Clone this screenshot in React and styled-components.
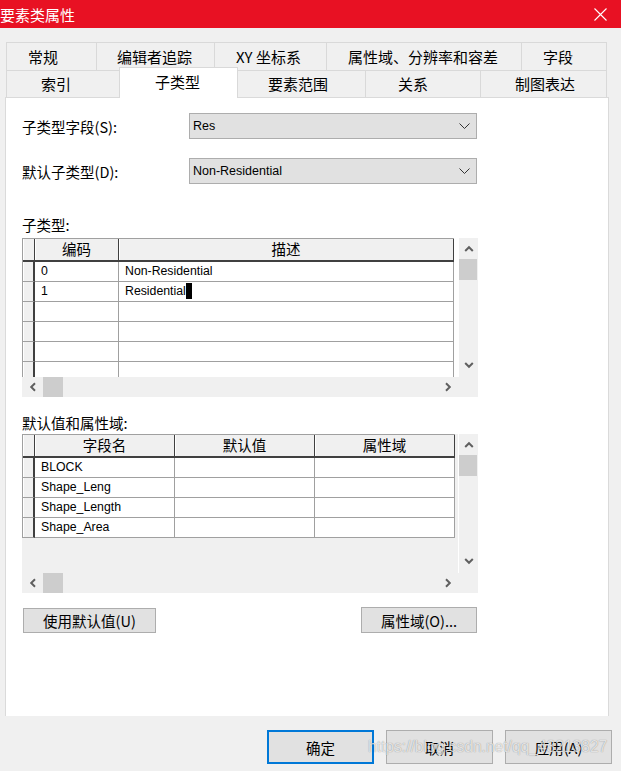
import React from "react";
import styled, { createGlobalStyle, css } from "styled-components";

const GlobalStyle = createGlobalStyle`
  html, body { margin: 0; padding: 0; background: #f0f0f0; }
  body { font-family: "Noto Sans CJK SC", "Liberation Sans", sans-serif; color: #000; }
  * { box-sizing: border-box; }
`;

const Window = styled.div`
  position: relative;
  width: 621px;
  height: 771px;
  background: #f0f0f0;
  display: flex;
  flex-direction: column;
  overflow: hidden;
`;

const TitleBar = styled.div`
  flex: none;
  height: 28px;
  background: #e81123;
  color: #fff;
  display: flex;
  align-items: center;
  justify-content: space-between;
  padding: 0 14px 0 0;
  font-size: 15px;
`;

const TabStrip = styled.div`
  flex: none;
  margin: 14px 0 0 6px;
  width: 601px;
  display: flex;
  flex-direction: column;
  font-size: 15px;
`;

const TabRow = styled.div`
  display: flex;
  align-items: flex-start;
  height: ${(p) => p.$h}px;
`;

const Tab = styled.div`
  flex: none;
  width: ${(p) => p.$w}px;
  height: 100%;
  padding-left: ${(p) => p.$pad}px;
  padding-bottom: 1px;
  display: flex;
  align-items: center;
  white-space: nowrap;
  background: #f0f0f0;
  border-top: 1px solid #d9d9d9;
  border-left: 1px solid #d9d9d9;
  &:last-child { border-right: 1px solid #d9d9d9; }
  ${(p) =>
    p.$active &&
    css`
      position: relative;
      z-index: 1;
      background: #fff;
      height: 31px;
      margin-top: -3px;
      padding-bottom: 4px;
      border-right: 1px solid #d9d9d9;
      & + div { border-left: none; }
    `}
`;

const Panel = styled.div`
  flex: none;
  margin-left: 5px;
  width: 604px;
  height: 619px;
  background: #fff;
  border: 1px solid #dadada;
  border-bottom: none;
  padding: 15px 0 0 16px;
  display: flex;
  flex-direction: column;
`;

const FieldRow = styled.div`
  display: flex;
  align-items: center;
  height: 26px;
  margin-top: ${(p) => p.$mt || 0}px;
`;

const Label = styled.div`
  width: 167px;
  font-size: 14.5px;
  white-space: nowrap;
`;

const Combo = styled.div`
  width: 288px;
  height: 26px;
  background: #e1e1e1;
  border: 1px solid #adadad;
  display: flex;
  align-items: center;
  justify-content: space-between;
  padding: 0 6px 0 3px;
  font: 12.5px "Liberation Sans", sans-serif;
`;

const SectionLabel = styled.div`
  height: 20px;
  line-height: 20px;
  font-size: 14.5px;
  margin-top: ${(p) => p.$mt}px;
  margin-bottom: ${(p) => p.$mb}px;
`;

const GridBox = styled.div`
  width: 456px;
  height: 159px;
  display: grid;
  grid-template-columns: 437px 19px;
  grid-template-rows: 139px 20px;
  background: #f0f0f0;
`;

const DataArea = styled.div`
  overflow: hidden;
  background: ${(p) => p.$bg};
  border-right: 1px solid #fff;
`;

const Table = styled.div`
  width: max-content;
  display: flex;
  flex-direction: column;
  border-left: 1px solid #a0a0a0;
  border-top: 1px solid #a0a0a0;
`;

const TRow = styled.div`
  display: grid;
  grid-template-columns: ${(p) => p.$cols};
  height: ${(p) => (p.$head ? 23 : 20)}px;
  flex: none;
`;

const HeadCell = styled.div`
  background: #f0f0f0;
  border-right: 1px solid #404040;
  border-bottom: 2px solid #404040;
  box-shadow: inset 1px 0 0 #fff;
  display: flex;
  align-items: center;
  justify-content: center;
  font-size: 14.5px;
  line-height: 1;
`;

const SelectCell = styled.div`
  background: #f0f0f0;
  border-right: 2px solid #404040;
  border-bottom: 1px solid #a0a0a0;
  box-shadow: inset 1px 0 0 #fff;
`;

const Cell = styled.div`
  background: #fff;
  border-right: 1px solid #a0a0a0;
  border-bottom: 1px solid #a0a0a0;
  padding-left: 6px;
  font: 12.3px "Liberation Sans", sans-serif;
  line-height: 19px;
  white-space: nowrap;
`;

const Caret = styled.span`
  display: inline-block;
  width: 6px;
  height: 16px;
  background: #000;
  vertical-align: -4px;
`;

const VScroll = styled.div`
  display: flex;
  flex-direction: column;
  background: #f0f0f0;
`;

const HScroll = styled.div`
  display: flex;
  background: #f0f0f0;
`;

const ArrowBox = styled.div`
  flex: none;
  width: ${(p) => (p.$w ? `${p.$w}px` : "100%")};
  height: ${(p) => (p.$h ? `${p.$h}px` : "100%")};
  display: flex;
  align-items: center;
  justify-content: center;
`;

const Thumb = styled.div`
  flex: none;
  background: #cdcdcd;
  width: ${(p) => (p.$v ? "18px" : "20px")};
  height: ${(p) => (p.$v ? "21px" : "100%")};
`;

const Spacer = styled.div`
  flex: 1;
`;

const ButtonRow = styled.div`
  width: 455px;
  margin-top: 14px;
  display: flex;
  justify-content: space-between;
  align-items: flex-start;
`;

const Button = styled.div`
  width: ${(p) => p.$w}px;
  height: ${(p) => p.$h}px;
  margin-top: ${(p) => p.$mt || 0}px;
  margin-left: ${(p) => p.$ml || 0}px;
  background: #e1e1e1;
  border: ${(p) => (p.$primary ? "2px solid #0078d7" : "1px solid #adadad")};
  display: flex;
  align-items: center;
  justify-content: center;
  font-size: 14.5px;
  white-space: nowrap;
`;

const Footer = styled.div`
  flex: none;
  margin-top: 14px;
  padding-right: 9px;
  display: flex;
  justify-content: flex-end;
  gap: 12px;
`;

const Watermark = styled.div`
  position: absolute;
  left: 368px;
  top: 738px;
  font: 15.6px "Liberation Sans", sans-serif;
  color: rgba(255, 255, 255, 0.75);
  text-shadow: 0 0 1px rgba(0, 0, 0, 0.45);
  pointer-events: none;
  white-space: nowrap;
`;

const Chevron = ({ dir = "down", size = 10, color = "#606060", width = 2 }) => {
  const rot = { down: 0, up: 180, left: 90, right: -90 }[dir];
  return (
    <svg width={size} height={size} viewBox="0 0 10 10" style={{ transform: `rotate(${rot}deg)` }}>
      <path d="M1.2 3 L5 6.8 L8.8 3" fill="none" stroke={color} strokeWidth={width} />
    </svg>
  );
};

const ComboArrow = () => (
  <svg width="11" height="6" viewBox="0 0 11 6">
    <path d="M0.5 0.5 L5.5 5.5 L10.5 0.5" fill="none" stroke="#333" strokeWidth="1" />
  </svg>
);

const CloseIcon = () => (
  <svg width="13" height="13" viewBox="0 0 13 13">
    <path d="M0.5 0.5 L12.5 12.5 M12.5 0.5 L0.5 12.5" stroke="#fff" strokeWidth="1.1" />
  </svg>
);

const row1 = [
  ["常规", 90, 21],
  ["编辑者追踪", 118, 20],
  ["XY 坐标系", 112, 21],
  ["属性域、分辨率和容差", 195, 21],
  ["字段", 86, 21],
];

const row2 = [
  ["索引", 113, 34],
  ["子类型", 119, 35, true],
  ["要素范围", 127, 30],
  ["关系", 115, 32],
  ["制图表达", 127, 34],
];

const DataGrid = ({ cols, heads, rows, bg, emptyRows }) => {
  const filled = [...rows];
  for (let i = 0; i < emptyRows; i++) filled.push(heads.map(() => ""));
  return (
    <GridBox>
      <DataArea $bg={bg}>
        <Table>
          <TRow $head $cols={cols}>
            <HeadCell />
            {heads.map((h) => (
              <HeadCell key={h}>{h}</HeadCell>
            ))}
          </TRow>
          {filled.map((r, i) => (
            <TRow key={i} $cols={cols}>
              <SelectCell />
              {r.map((c, j) => (
                <Cell key={j}>{c}</Cell>
              ))}
            </TRow>
          ))}
        </Table>
      </DataArea>
      <VScroll>
        <ArrowBox $h={21}>
          <Chevron dir="up" />
        </ArrowBox>
        <Thumb $v />
        <Spacer />
        <ArrowBox $h={24}>
          <Chevron dir="down" />
        </ArrowBox>
      </VScroll>
      <HScroll>
        <ArrowBox $w={21}>
          <Chevron dir="left" />
        </ArrowBox>
        <Thumb />
        <Spacer />
        <ArrowBox $w={23}>
          <Chevron dir="right" />
        </ArrowBox>
      </HScroll>
      <div />
    </GridBox>
  );
};

export default function App() {
  return (
    <>
      <GlobalStyle />
      <Window>
        <TitleBar>
          <span>要素类属性</span>
          <CloseIcon />
        </TitleBar>

        <TabStrip>
          <TabRow $h={28}>
            {row1.map(([t, w, pad]) => (
              <Tab key={t} $w={w} $pad={pad}>
                {t}
              </Tab>
            ))}
          </TabRow>
          <TabRow $h={27}>
            {row2.map(([t, w, pad, active]) => (
              <Tab key={t} $w={w} $pad={pad} $active={active}>
                {t}
              </Tab>
            ))}
          </TabRow>
        </TabStrip>

        <Panel>
          <FieldRow>
            <Label>子类型字段(S):</Label>
            <Combo>
              <span>Res</span>
              <ComboArrow />
            </Combo>
          </FieldRow>
          <FieldRow $mt={19}>
            <Label>默认子类型(D):</Label>
            <Combo>
              <span>Non-Residential</span>
              <ComboArrow />
            </Combo>
          </FieldRow>

          <SectionLabel $mt={31} $mb={3}>子类型:</SectionLabel>
          <DataGrid
            cols="12px 84px 335px"
            heads={["编码", "描述"]}
            rows={[
              ["0", "Non-Residential"],
              ["1", <>Residential<Caret /></>],
            ]}
            emptyRows={4}
            bg="#fff"
          />

          <SectionLabel $mt={16} $mb={1}>默认值和属性域:</SectionLabel>
          <DataGrid
            cols="12px 140px 140px 140px"
            heads={["字段名", "默认值", "属性域"]}
            rows={[
              ["BLOCK", "", ""],
              ["Shape_Leng", "", ""],
              ["Shape_Length", "", ""],
              ["Shape_Area", "", ""],
            ]}
            emptyRows={0}
            bg="#f0f0f0"
          />

          <ButtonRow>
            <Button $w={133} $h={25} $mt={1} $ml={1}>使用默认值(U)</Button>
            <Button $w={116} $h={26}>属性域(O)...</Button>
          </ButtonRow>
        </Panel>

        <Footer>
          <Button $w={107} $h={34} $primary>确定</Button>
          <Button $w={107} $h={34}>取消</Button>
          <Button $w={107} $h={34}>应用(A)</Button>
        </Footer>

        <Watermark>https://blog.csdn.net/qq_43213827</Watermark>
      </Window>
    </>
  );
}
